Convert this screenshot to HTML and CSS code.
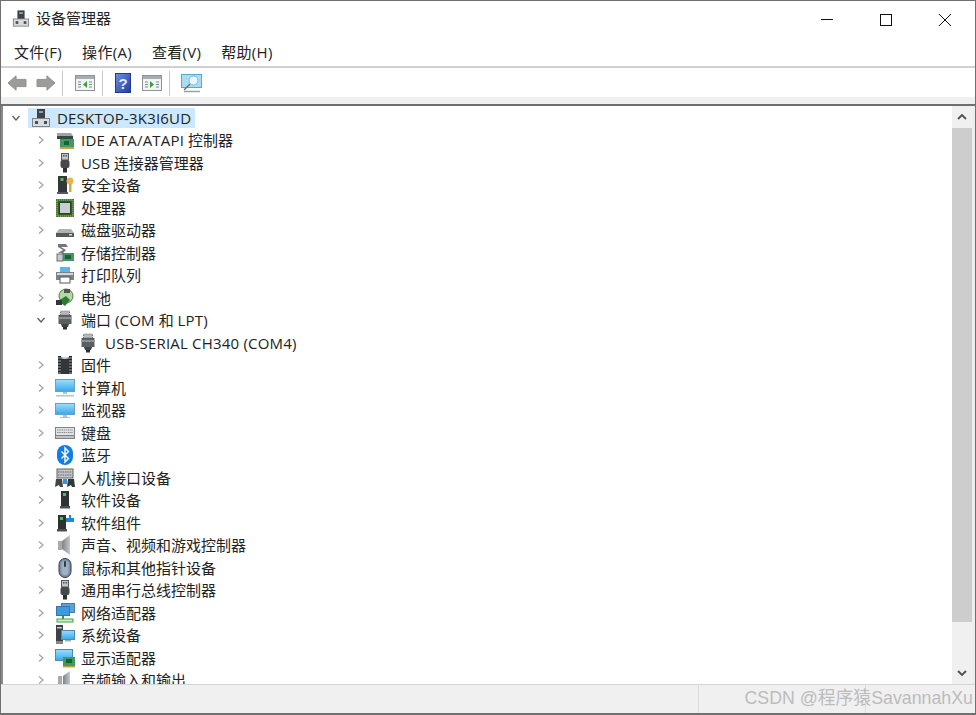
FILE: index.html
```html
<!DOCTYPE html>
<html lang="zh-CN">
<head>
<meta charset="utf-8">
<title>设备管理器</title>
<link rel="stylesheet" href="styles.css">
</head>
<body>
<svg class="defs" aria-hidden="true">
  <defs>
    <linearGradient id="g-screen" x1="0" y1="0" x2="0" y2="1"><stop offset="0" stop-color="#9adcfb"/><stop offset="1" stop-color="#37aaec"/></linearGradient>
    <linearGradient id="g-help" x1="0" y1="0" x2="1" y2="1"><stop offset="0" stop-color="#6f8fe0"/><stop offset="1" stop-color="#1f3f9f"/></linearGradient>
    <linearGradient id="g-spk" x1="0" y1="0" x2="1" y2="0"><stop offset="0" stop-color="#7e8285"/><stop offset="1" stop-color="#c6c9cb"/></linearGradient>
    <symbol id="i-pc" viewBox="0 0 20 20"><rect x="6" y="1" width="8" height="10" fill="#3d4347"/><rect x="8" y="3" width="4" height="2" fill="#9aa0a4"/><rect x="1" y="10" width="18" height="9" fill="#7f8488"/><rect x="2" y="11" width="16" height="7" fill="#d9dcde"/><rect x="4" y="13" width="3" height="3" fill="#4a4f53"/><rect x="13" y="13" width="3" height="3" fill="#4a4f53"/></symbol>
    <symbol id="i-ide" viewBox="0 0 20 20"><path d="M2 3h14l2 3v3H2z" fill="#9ea3a6"/><rect x="2" y="6" width="16" height="3" fill="#3e4346"/><rect x="5" y="9" width="14" height="8" fill="#3f9a62"/><rect x="9" y="11" width="5" height="4" fill="#1d5f38"/><path d="M5 17h14v2H5z" fill="#c9a33a"/></symbol>
    <symbol id="i-usb" viewBox="0 0 20 20"><rect x="6.500" y=".5" width="7" height="6.500" fill="#c2c5c7" stroke="#55595c"/><rect x="8" y="2" width="1.500" height="1.500" fill="#55595c"/><rect x="10.500" y="2" width="1.500" height="1.500" fill="#55595c"/><rect x="5.500" y="7" width="9" height="8" rx="2" fill="#45494c"/><rect x="8" y="15" width="4" height="4.500" fill="#2e3134"/></symbol>
    <symbol id="i-sec" viewBox="0 0 20 20"><rect x="3" y="1" width="9" height="16" fill="#33373a"/><rect x="5.500" y="3" width="3" height="3" fill="#4cc04c"/><rect x="2" y="17" width="11" height="2" fill="#55595c"/><circle cx="15" cy="6" r="3.500" fill="#e2b64c"/><rect x="14" y="9" width="2.500" height="8" fill="#d6a73c"/></symbol>
    <symbol id="i-cpu" viewBox="0 0 20 20"><rect x="1" y="1" width="18" height="18" fill="#3f7a3a"/><rect x="2" y="2" width="16" height="16" fill="none" stroke="#b9b25a" stroke-dasharray="1 1"/><rect x="3.500" y="3.500" width="13" height="13" fill="#26402a"/><rect x="5" y="5" width="10" height="10" fill="#c9ced0"/></symbol>
    <symbol id="i-disk" viewBox="0 0 20 20"><path d="M4 9h12l3 4v3H1v-3z" fill="#aeb2b5"/><rect x="1" y="13" width="18" height="4" fill="#55595c"/><rect x="14" y="14" width="3" height="1.500" fill="#d8dbdd"/></symbol>
    <symbol id="i-store" viewBox="0 0 20 20"><path d="M3 1h8l2 3H6l5 3-3 3H3l5-3-5-3z" fill="#73777a"/><rect x="7" y="10" width="12" height="8" fill="#3f9a62"/><rect x="10" y="12" width="6" height="4" fill="#1d5f38"/><rect x="2" y="11" width="6" height="7" fill="#c6c9cb" stroke="#6a6e71"/></symbol>
    <symbol id="i-print" viewBox="0 0 20 20"><rect x="5" y="2" width="10" height="5" fill="#5bb5ea"/><rect x="1" y="7" width="18" height="8" fill="#7d8285"/><rect x="2" y="8" width="16" height="2" fill="#d5d8da"/><rect x="5" y="12" width="10" height="6" fill="#fff" stroke="#55595c"/></symbol>
    <symbol id="i-bat" viewBox="0 0 20 20"><circle cx="11" cy="8" r="7" fill="#b5d8a8" stroke="#4a7f3f"/><path d="M3 13l8-5 4 4-5 6z" fill="#2f7a33"/><path d="M1 12h6v5H1z" fill="#33373a"/><path d="M9 1h6v4H9z" fill="#555"/></symbol>
    <symbol id="i-port" viewBox="0 0 20 20"><rect x="5.500" y="1" width="9" height="4" fill="#b4b8bb" stroke="#707477" stroke-dasharray="1 1"/><rect x="3.500" y="5" width="13" height="9" fill="#5a5f62"/><rect x="3.500" y="7" width="13" height="2" fill="#8d9194"/><path d="M6 14h8l-1 3H7z" fill="#3f4346"/><rect x="8" y="17" width="4" height="2.500" fill="#2e3134"/></symbol>
    <symbol id="i-chip" viewBox="0 0 20 20"><path d="M3 1h3a4 3 0 0 0 8 0h3v18H3z" fill="#26292c"/><path d="M3 3h14M3 6h14M3 9h14M3 12h14M3 15h14M3 18h14" stroke="#a0a4a7"/><path d="M6 4.500h8V19H6z" fill="#33373a"/></symbol>
    <symbol id="i-comp" viewBox="0 0 20 20"><rect x="0" y="1" width="20" height="13" fill="#6b9fc4"/><rect x="1" y="2" width="18" height="11" fill="url(#g-screen)"/><rect x="8" y="14" width="4" height="2" fill="#a9c2d2"/><rect x="1" y="17" width="18" height="1.500" fill="#b4c3cd"/></symbol>
    <symbol id="i-mon" viewBox="0 0 20 20"><rect x="0" y="3" width="20" height="12" fill="#6b9fc4"/><rect x="1" y="4" width="18" height="10" fill="url(#g-screen)"/><rect x="8" y="15" width="4" height="2" fill="#a9c2d2"/><rect x="5" y="17" width="10" height="1" fill="#b4c3cd"/></symbol>
    <symbol id="i-key" viewBox="0 0 20 20"><rect x="0" y="4" width="20" height="12" fill="#7f8386"/><rect x="1" y="5" width="18" height="7" fill="#e0e2e3"/><path d="M2 7h16M2 9.500h16" stroke="#8a8e91" stroke-dasharray="1.500 .7"/><rect x="1" y="13" width="18" height="2" fill="#c0c3c5"/></symbol>
    <symbol id="i-bt" viewBox="0 0 20 20"><rect x="2" y="0" width="16" height="20" rx="8" fill="#0f7fe6"/><path d="M6.500 6.500l7 7-3.500 3.500V3l3.500 3.500-7 7" fill="none" stroke="#fff" stroke-width="1.400"/></symbol>
    <symbol id="i-hid" viewBox="0 0 20 20"><rect x="2" y="1" width="16" height="9" fill="#c3c6c8" stroke="#5f6366"/><path d="M3 4h14M3 7h14" stroke="#5f6366" stroke-dasharray="1.500 .8"/><path d="M0 19l1-8h6l1 8H5l-1-2z" fill="#3f4447"/><path d="M12 19l1-8h6l1 8h-3l-1-2z" fill="#33383b"/><rect x="8" y="11" width="4" height="5" fill="#3c8fd8"/></symbol>
    <symbol id="i-soft" viewBox="0 0 20 20"><rect x="6" y="1" width="8" height="15" fill="#2e3235"/><rect x="8" y="3" width="3" height="3" fill="#4cc04c"/><rect x="5" y="16" width="10" height="2.500" fill="#4c5053"/></symbol>
    <symbol id="i-comp2" viewBox="0 0 20 20"><rect x="3" y="2" width="8" height="14" fill="#2e3235"/><rect x="5" y="4" width="3" height="3" fill="#4cc04c"/><rect x="2" y="16" width="10" height="2.500" fill="#4c5053"/><path d="M11 5h3V2h2v3h3v4h-8z" fill="#1e88d8"/></symbol>
    <symbol id="i-snd" viewBox="0 0 20 20"><rect x="3" y="6" width="4" height="9" fill="#a7abae"/><path d="M7 6l8-6v20l-8-6z" fill="url(#g-spk)"/></symbol>
    <symbol id="i-mouse" viewBox="0 0 20 20"><rect x="4" y=".5" width="12" height="19" rx="6" fill="#7f90a8" stroke="#33393f"/><rect x="6.500" y="3" width="7" height="14" rx="3.500" fill="#9fb0c6"/><rect x="9" y="3" width="2" height="6" rx="1" fill="#33393f"/></symbol>
    <symbol id="i-net" viewBox="0 0 20 20"><rect x="6.500" y=".5" width="13" height="9" fill="#5aa3d8" stroke="#3f7fb0"/><rect x="1.500" y="3.500" width="13" height="9" fill="#3c9be0" stroke="#2f77ad"/><path d="M8 13v3" stroke="#2f9a3f" stroke-width="2"/><rect x="2" y="16" width="16" height="3" fill="#d0efd0" stroke="#43a049"/></symbol>
    <symbol id="i-sys" viewBox="0 0 20 20"><rect x="1" y="0" width="7" height="16" fill="#3d4245"/><rect x="2" y="2" width="5" height="1.500" fill="#c8ccce"/><rect x="6.500" y="5.500" width="13" height="9" fill="url(#g-screen)" stroke="#4a8ab4"/><rect x="10" y="15" width="6" height="1.500" fill="#99aebd"/><rect x="1" y="16" width="7" height="3" fill="#888"/></symbol>
    <symbol id="i-disp" viewBox="0 0 20 20"><rect x=".5" y="1.500" width="17" height="11" fill="url(#g-screen)" stroke="#4a8ab4"/><rect x="8" y="9" width="12" height="9" fill="#3f9a62"/><rect x="11" y="11" width="6" height="4" fill="#1d5f38"/><path d="M8 18h12v1.500H8z" fill="#c9a33a"/></symbol>
    <symbol id="i-audio" viewBox="0 0 20 20"><rect x="3" y="6" width="4" height="9" fill="#a7abae"/><path d="M8 6l7-5v18l-7-5z" fill="url(#g-spk)"/></symbol>
    <symbol id="chev-r" viewBox="0 0 10 10"><path d="M3 1.500L7 5 3 8.500" fill="none" stroke="#a6a6a6" stroke-width="1.300"/></symbol>
    <symbol id="chev-d" viewBox="0 0 10 10"><path d="M1.500 3L5 7l3.500-4" fill="none" stroke="#5f5f5f" stroke-width="1.300"/></symbol>
  </defs>
</svg>

<div class="window">
  <header class="titlebar">
    <svg class="app-icon"><use href="#i-pc"/></svg>
    <span class="title">设备管理器</span>
    <div class="caption">
      <svg class="cap" viewBox="0 0 14 14"><path d="M1 6.500h12" stroke="#111"/></svg>
      <svg class="cap" viewBox="0 0 14 14"><rect x="1.500" y="1.500" width="11" height="11" fill="none" stroke="#111"/></svg>
      <svg class="cap" viewBox="0 0 14 14"><path d="M1 1l12 12M13 1L1 13" stroke="#111" fill="none"/></svg>
    </div>
  </header>

  <nav class="menubar">
    <span>文件(F)</span><span>操作(A)</span><span>查看(V)</span><span>帮助(H)</span>
  </nav>

  <div class="toolbar">
    <svg class="tool arrow" viewBox="0 0 22 20"><path d="M1 10l9-8v4h11v8H10v4z" fill="#9a9d9a" stroke="#8a8c8a"/></svg>
    <svg class="tool arrow" viewBox="0 0 22 20"><path d="M21 10l-9-8v4H1v8h11v4z" fill="#9a9d9a" stroke="#8a8c8a"/></svg>
    <i class="sep first"></i>
    <svg class="tool pane" viewBox="0 0 20 16"><rect x=".5" y=".5" width="19" height="15" fill="#f4f4f4" stroke="#8f9396"/><rect x="1" y="1" width="18" height="3" fill="#a9adb0"/><path d="M3 7h3M3 9.500h3M3 12h3M14 7h3M14 9.500h3M14 12h3" stroke="#6f8fa8"/><path d="M12 6v7L8 9.500z" fill="#37a637"/></svg>
    <i class="sep"></i>
    <svg class="tool help" viewBox="0 0 16 20"><rect width="16" height="20" fill="#1f3a94"/><rect x="1" y="1" width="14" height="18" fill="url(#g-help)"/><text x="8" y="15.500" class="help-q">?</text></svg>
    <svg class="tool pane second" viewBox="0 0 20 16"><rect x=".5" y=".5" width="19" height="15" fill="#f4f4f4" stroke="#8f9396"/><rect x="1" y="1" width="18" height="3" fill="#a9adb0"/><path d="M3 7h3M3 9.500h3M3 12h3M14 7h3M14 9.500h3M14 12h3" stroke="#6f8fa8"/><path d="M8 6v7l4-3.500z" fill="#37a637"/></svg>
    <i class="sep"></i>
    <svg class="tool scan" viewBox="0 0 21 19"><rect x=".5" y=".5" width="20" height="13" fill="#a9ddf5" stroke="#5ba6cf"/><circle cx="12.500" cy="6.500" r="4.500" fill="#e8f7fd" stroke="#7fb8d6"/><path d="M9 10L3 16" stroke="#6c7073" stroke-width="1.500"/><path d="M3 17.500h16" stroke="#9aa0a4" stroke-width="1.500"/></svg>
  </div>
  <div class="band"></div>

  <main class="content">
    <div class="tree">
      <div class="row root"><svg class="chev"><use href="#chev-d"/></svg><div class="sel"><svg class="ico"><use href="#i-pc"/></svg><span class="lat">DESKTOP-3K3I6UD</span></div></div>
      <div class="row"><svg class="chev"><use href="#chev-r"/></svg><svg class="ico"><use href="#i-ide"/></svg><span><span class="lat">IDE ATA/ATAPI</span> 控制器</span></div>
      <div class="row"><svg class="chev"><use href="#chev-r"/></svg><svg class="ico"><use href="#i-usb"/></svg><span>USB 连接器管理器</span></div>
      <div class="row"><svg class="chev"><use href="#chev-r"/></svg><svg class="ico"><use href="#i-sec"/></svg><span>安全设备</span></div>
      <div class="row"><svg class="chev"><use href="#chev-r"/></svg><svg class="ico"><use href="#i-cpu"/></svg><span>处理器</span></div>
      <div class="row"><svg class="chev"><use href="#chev-r"/></svg><svg class="ico"><use href="#i-disk"/></svg><span>磁盘驱动器</span></div>
      <div class="row"><svg class="chev"><use href="#chev-r"/></svg><svg class="ico"><use href="#i-store"/></svg><span>存储控制器</span></div>
      <div class="row"><svg class="chev"><use href="#chev-r"/></svg><svg class="ico"><use href="#i-print"/></svg><span>打印队列</span></div>
      <div class="row"><svg class="chev"><use href="#chev-r"/></svg><svg class="ico"><use href="#i-bat"/></svg><span>电池</span></div>
      <div class="row"><svg class="chev"><use href="#chev-d"/></svg><svg class="ico"><use href="#i-port"/></svg><span>端口 <span class="lat">(COM</span> 和 <span class="lat">LPT)</span></span></div>
      <div class="row child"><svg class="ico"><use href="#i-port"/></svg><span class="lat">USB-SERIAL CH340 (COM4)</span></div>
      <div class="row"><svg class="chev"><use href="#chev-r"/></svg><svg class="ico"><use href="#i-chip"/></svg><span>固件</span></div>
      <div class="row"><svg class="chev"><use href="#chev-r"/></svg><svg class="ico"><use href="#i-comp"/></svg><span>计算机</span></div>
      <div class="row"><svg class="chev"><use href="#chev-r"/></svg><svg class="ico"><use href="#i-mon"/></svg><span>监视器</span></div>
      <div class="row"><svg class="chev"><use href="#chev-r"/></svg><svg class="ico"><use href="#i-key"/></svg><span>键盘</span></div>
      <div class="row"><svg class="chev"><use href="#chev-r"/></svg><svg class="ico"><use href="#i-bt"/></svg><span>蓝牙</span></div>
      <div class="row"><svg class="chev"><use href="#chev-r"/></svg><svg class="ico"><use href="#i-hid"/></svg><span>人机接口设备</span></div>
      <div class="row"><svg class="chev"><use href="#chev-r"/></svg><svg class="ico"><use href="#i-soft"/></svg><span>软件设备</span></div>
      <div class="row"><svg class="chev"><use href="#chev-r"/></svg><svg class="ico"><use href="#i-comp2"/></svg><span>软件组件</span></div>
      <div class="row"><svg class="chev"><use href="#chev-r"/></svg><svg class="ico"><use href="#i-snd"/></svg><span>声音、视频和游戏控制器</span></div>
      <div class="row"><svg class="chev"><use href="#chev-r"/></svg><svg class="ico"><use href="#i-mouse"/></svg><span>鼠标和其他指针设备</span></div>
      <div class="row"><svg class="chev"><use href="#chev-r"/></svg><svg class="ico"><use href="#i-usb"/></svg><span>通用串行总线控制器</span></div>
      <div class="row"><svg class="chev"><use href="#chev-r"/></svg><svg class="ico"><use href="#i-net"/></svg><span>网络适配器</span></div>
      <div class="row"><svg class="chev"><use href="#chev-r"/></svg><svg class="ico"><use href="#i-sys"/></svg><span>系统设备</span></div>
      <div class="row"><svg class="chev"><use href="#chev-r"/></svg><svg class="ico"><use href="#i-disp"/></svg><span>显示适配器</span></div>
      <div class="row"><svg class="chev"><use href="#chev-r"/></svg><svg class="ico"><use href="#i-audio"/></svg><span>音频输入和输出</span></div>
    </div>
    <div class="scrollbar">
      <svg class="sb-arrow" viewBox="0 0 20 22"><path d="M6 13l4-4 4 4" fill="none" stroke="#505050" stroke-width="1.800"/></svg>
      <div class="thumb"></div>
      <div class="spacer"></div>
      <svg class="sb-arrow" viewBox="0 0 20 22"><path d="M6 9l4 4 4-4" fill="none" stroke="#505050" stroke-width="1.800"/></svg>
    </div>
  </main>

  <footer class="statusbar">
    <div class="cell main"></div>
    <div class="cell mid"></div>
    <div class="cell end"></div>
    <span class="watermark">CSDN @程序猿SavannahXu</span>
  </footer>
</div>
</body>
</html>
```

FILE: styles.css
```css
* { box-sizing: border-box; }
html, body { margin: 0; padding: 0; height: 100%; background: #fff; overflow: hidden; }
body { font-family: "Open Sans", "Noto Sans CJK SC", sans-serif; font-size: 15px; color: #222; }
.defs { position: absolute; width: 0; height: 0; }

.window {
  height: 715px;
  display: flex;
  flex-direction: column;
  border: 1px solid #707070;
  border-bottom-width: 2px;
}

.titlebar { height: 36px; display: flex; align-items: center; padding-left: 11px; flex: none; }
.app-icon { width: 18px; height: 19px; margin-top: -2px; }
.title { margin-left: 6px; margin-top: -2px; line-height: 20px; }
.caption { margin-left: auto; display: flex; margin-top: 2px; }
.cap { width: 14px; height: 14px; margin-right: 45px; }
.cap:last-child { margin-right: 23px; }

.menubar { height: 31px; display: flex; align-items: center; gap: 20px; padding: 0 0 0 13px; flex: none; border-bottom: 2px solid #d0d0d0; letter-spacing: .3px; }
.menubar span { line-height: 20px; }

.toolbar { height: 29px; display: flex; align-items: center; padding: 1px 0 0 6px; flex: none; }
.tool { display: block; flex: none; }
.arrow { width: 20px; height: 18px; margin-right: 9px; }
.sep { width: 1px; height: 25px; background: #c8c8c8; margin: 0 12px 0 0; flex: none; }
.sep.first { margin-left: -3px; }
.pane { width: 20px; height: 16px; margin-right: 7px; }
.pane.second { margin-left: 11px; }
.help { width: 16px; height: 20px; }
.help-q { font-size: 15px; font-weight: 700; fill: #e4eaf8; text-anchor: middle; font-family: "Liberation Sans", sans-serif; }
.scan { width: 21px; height: 19px; margin-left: -1px; }

.band { height: 9px; background: #f0f0f0; flex: none; border-bottom: 2px solid #6f6f6f; }

.content { flex: 1; min-height: 0; display: flex; border-left: 2px solid #8a8a8a; border-right: 3px solid #eee; }
.tree { flex: 1; min-width: 0; overflow: hidden; padding-top: .5px; }
.row { height: 22.5px; display: flex; align-items: center; padding-left: 33px; white-space: nowrap; line-height: 20px; }
.lat { letter-spacing: .2px; }
.chev { width: 10px; height: 10px; flex: none; margin-right: 9px; }
.ico { width: 20px; height: 20px; flex: none; margin-right: 6px; }
.row.root { padding-left: 8px; }
.row.root .chev { margin-right: 7px; }
.sel { display: flex; align-items: center; height: 20px; background: #cce8ff; padding: 0 4px 0 3px; }
.row.child { padding-left: 75px; }
.row.child .ico { margin-right: 7px; }

.scrollbar { width: 20px; flex: none; background: #f0f0f0; display: flex; flex-direction: column; }
.sb-arrow { width: 20px; height: 22px; flex: none; display: block; }
.thumb { height: 494px; background: #cdcdcd; flex: none; }
.spacer { flex: 1; }

.statusbar { height: 29px; flex: none; display: flex; background: #f0f0f0; border-top: 1px solid #d5d5d5; position: relative; }
.cell { height: 100%; border-right: 1px solid #dcdcdc; }
.cell.main { width: 698px; }
.cell.mid { width: 167px; }
.cell.end { flex: 1; border-right: 0; }
.watermark { position: absolute; right: 2px; top: 2px; font-family: "Liberation Sans", "Noto Sans CJK SC", sans-serif; font-size: 17.8px; line-height: 22px; color: #bcbcbc; white-space: nowrap; }
```
